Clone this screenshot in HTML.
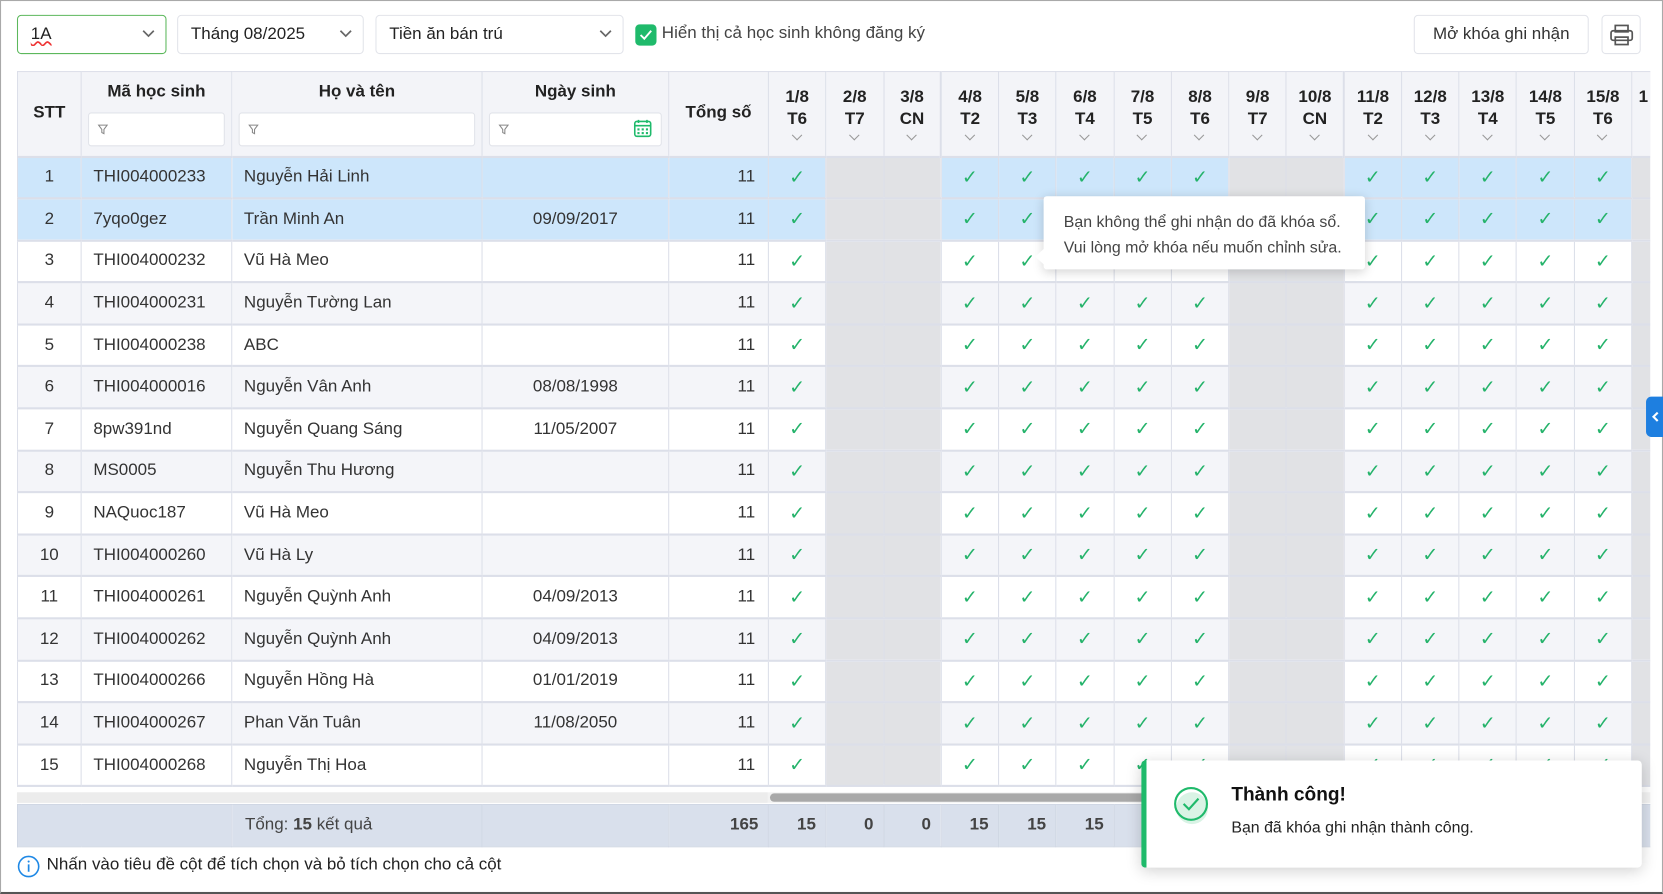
<!DOCTYPE html>
<html><head><meta charset="utf-8">
<style>
html,body{margin:0;padding:0;background:#fff;overflow:hidden}
body{width:1663px;height:894px}
#s{position:absolute;left:0;top:0;width:1568px;height:843px;transform:scale(1.06059);transform-origin:0 0;font-family:"Liberation Sans",sans-serif;color:#333;font-size:16px;box-sizing:border-box;border:1px solid #a9a9a9;border-bottom:2px solid #555}
.sel{position:absolute;top:13px;height:37px;border:1px solid #e2e4ea;border-radius:4px;box-sizing:border-box;padding:0 12px;line-height:35px;font-size:16px;color:#222}
.sel svg{position:absolute;right:10px;top:13px}
table{border-collapse:collapse;table-layout:fixed;width:1540px}
td,th{border:1px solid #dcdfe9;padding:0;overflow:hidden;white-space:nowrap}
th{background:#f3f4f8;font-weight:bold;color:#222;font-size:16px;vertical-align:top}
tbody tr{height:39.6px}
tbody td{border-top:2px solid #dcdfe9;border-bottom:2px solid #dcdfe9}
tbody tr:nth-child(even) td{background:#f4f5f9}
tbody tr.h td{background:#cde6fb}
td.c{text-align:center}
td.l{padding-left:11px}
td.r{text-align:right;padding-right:12px}
td.k::after{content:"✓";color:#25b36b;font-family:"DejaVu Sans",sans-serif;font-size:18px}
td.k{text-align:center}
tbody tr td.w{background:#e1e2e5!important}
.d{text-align:center;line-height:21px;padding-top:13px}
.d i{display:block;height:14px;position:relative}
.d i::after{content:"";position:absolute;left:50%;top:1px;width:6px;height:6px;margin-left:-4px;border-right:1.3px solid #999;border-bottom:1.3px solid #999;transform:rotate(45deg)}
.f{margin:10px 6px 0;height:30px;border:1px solid #e2e4ea;border-radius:3px;background:#fff;position:relative}
.f svg{position:absolute;left:8px;top:10px}
.ft td{background:#d9e0ec;border:1px solid #d0d7e4;height:33px;font-weight:bold;color:#444;text-align:right;padding-right:9px}
</style></head><body><div id="s">
<div class="sel" style="left:15px;width:141px;border-color:#5cb85c"><span style="text-decoration:underline wavy #e33">1A</span><svg width="12" height="8"><path d="M1 1l5 5 5-5" fill="none" stroke="#666" stroke-width="1.6"/></svg></div>
<div class="sel" style="left:166px;width:176px">Tháng 08/2025<svg width="12" height="8"><path d="M1 1l5 5 5-5" fill="none" stroke="#666" stroke-width="1.6"/></svg></div>
<div class="sel" style="left:353px;width:234px">Tiền ăn bán trú<svg width="12" height="8"><path d="M1 1l5 5 5-5" fill="none" stroke="#666" stroke-width="1.6"/></svg></div>
<div style="position:absolute;left:598px;top:22px;width:20px;height:20px;background:#1fba6b;border-radius:4px"><svg width="20" height="20"><path d="M5 10l3.5 3.5L15 6" fill="none" stroke="#fff" stroke-width="1.8"/></svg></div>
<div style="position:absolute;left:623px;top:22px;font-size:16px;color:#444">Hiển thị cả học sinh không đăng ký</div>
<div class="sel" style="left:1332px;width:165px;text-align:center;color:#333">Mở khóa ghi nhận</div>
<div class="sel" style="left:1509px;width:37px;padding:0"><svg width="37" height="37" style="position:absolute;left:0;top:0"><g fill="none" stroke="#555" stroke-width="1.6"><rect x="12" y="9" width="12" height="6"/><rect x="8" y="14" width="20" height="9" rx="2"/><rect x="12" y="20" width="12" height="7"/></g></svg></div>

<div style="position:absolute;left:15px;top:66px;width:1540px;height:680px;overflow:hidden">
<table>
<colgroup><col style="width:60px"><col style="width:142px"><col style="width:236px"><col style="width:176px"><col style="width:94px"><col span="15" style="width:54.27px"><col style="width:18px"></colgroup>
<thead><tr style="height:80px">
<th style="vertical-align:middle">STT</th>
<th><div style="text-align:center;margin-top:10px">Mã học sinh</div><div class="f"><svg width="10" height="10"><path d="M1 1h8L6 5v4L4 8V5z" fill="none" stroke="#888"/></svg></div></th>
<th><div style="text-align:center;margin-top:10px">Họ và tên</div><div class="f"><svg width="10" height="10"><path d="M1 1h8L6 5v4L4 8V5z" fill="none" stroke="#888"/></svg></div></th>
<th><div style="text-align:center;margin-top:10px">Ngày sinh</div><div class="f"><svg width="10" height="10"><path d="M1 1h8L6 5v4L4 8V5z" fill="none" stroke="#888"/></svg><svg width="18" height="18" style="left:auto;right:8px;top:5px"><g fill="none" stroke="#1fba6b" stroke-width="1.5"><rect x="1.5" y="2.5" width="15" height="14" rx="2"/><path d="M1.5 6.5h15M5 1v3M13 1v3"/></g><g fill="#1fba6b"><rect x="4" y="9" width="2" height="2"/><rect x="8" y="9" width="2" height="2"/><rect x="12" y="9" width="2" height="2"/><rect x="4" y="12.5" width="2" height="2"/><rect x="8" y="12.5" width="2" height="2"/><rect x="12" y="12.5" width="2" height="2"/></g></svg></div></th>
<th style="vertical-align:middle">Tổng số</th>
<th><div class="d">1/8<br>T6<i></i></div></th>
<th><div class="d">2/8<br>T7<i></i></div></th>
<th><div class="d">3/8<br>CN<i></i></div></th>
<th style="border-left:2px solid #dcdfe9"><div class="d">4/8<br>T2<i></i></div></th>
<th><div class="d">5/8<br>T3<i></i></div></th>
<th><div class="d">6/8<br>T4<i></i></div></th>
<th><div class="d">7/8<br>T5<i></i></div></th>
<th><div class="d">8/8<br>T6<i></i></div></th>
<th><div class="d">9/8<br>T7<i></i></div></th>
<th><div class="d">10/8<br>CN<i></i></div></th>
<th style="border-left:2px solid #dcdfe9"><div class="d">11/8<br>T2<i></i></div></th>
<th><div class="d">12/8<br>T3<i></i></div></th>
<th><div class="d">13/8<br>T4<i></i></div></th>
<th><div class="d">14/8<br>T5<i></i></div></th>
<th><div class="d">15/8<br>T6<i></i></div></th>
<th><div class="d" style="text-align:left;padding-left:6px">1</div></th>
</tr></thead>
<tbody>
<tr class="h"><td class="c">1</td><td class="l">THI004000233</td><td class="l">Nguyễn Hải Linh</td><td class="c"></td><td class="r">11</td><td class="k"></td><td class="w"></td><td class="w"></td><td class="k"></td><td class="k"></td><td class="k"></td><td class="k"></td><td class="k"></td><td class="w"></td><td class="w"></td><td class="k"></td><td class="k"></td><td class="k"></td><td class="k"></td><td class="k"></td><td class="w"></td></tr>
<tr class="h"><td class="c">2</td><td class="l">7yqo0gez</td><td class="l">Trần Minh An</td><td class="c">09/09/2017</td><td class="r">11</td><td class="k"></td><td class="w"></td><td class="w"></td><td class="k"></td><td class="k"></td><td class="k"></td><td class="k"></td><td class="k"></td><td class="w"></td><td class="w"></td><td class="k"></td><td class="k"></td><td class="k"></td><td class="k"></td><td class="k"></td><td class="w"></td></tr>
<tr><td class="c">3</td><td class="l">THI004000232</td><td class="l">Vũ Hà Meo</td><td class="c"></td><td class="r">11</td><td class="k"></td><td class="w"></td><td class="w"></td><td class="k"></td><td class="k"></td><td class="k"></td><td class="k"></td><td class="k"></td><td class="w"></td><td class="w"></td><td class="k"></td><td class="k"></td><td class="k"></td><td class="k"></td><td class="k"></td><td class="w"></td></tr>
<tr><td class="c">4</td><td class="l">THI004000231</td><td class="l">Nguyễn Tường Lan</td><td class="c"></td><td class="r">11</td><td class="k"></td><td class="w"></td><td class="w"></td><td class="k"></td><td class="k"></td><td class="k"></td><td class="k"></td><td class="k"></td><td class="w"></td><td class="w"></td><td class="k"></td><td class="k"></td><td class="k"></td><td class="k"></td><td class="k"></td><td class="w"></td></tr>
<tr><td class="c">5</td><td class="l">THI004000238</td><td class="l">ABC</td><td class="c"></td><td class="r">11</td><td class="k"></td><td class="w"></td><td class="w"></td><td class="k"></td><td class="k"></td><td class="k"></td><td class="k"></td><td class="k"></td><td class="w"></td><td class="w"></td><td class="k"></td><td class="k"></td><td class="k"></td><td class="k"></td><td class="k"></td><td class="w"></td></tr>
<tr><td class="c">6</td><td class="l">THI004000016</td><td class="l">Nguyễn Vân Anh</td><td class="c">08/08/1998</td><td class="r">11</td><td class="k"></td><td class="w"></td><td class="w"></td><td class="k"></td><td class="k"></td><td class="k"></td><td class="k"></td><td class="k"></td><td class="w"></td><td class="w"></td><td class="k"></td><td class="k"></td><td class="k"></td><td class="k"></td><td class="k"></td><td class="w"></td></tr>
<tr><td class="c">7</td><td class="l">8pw391nd</td><td class="l">Nguyễn Quang Sáng</td><td class="c">11/05/2007</td><td class="r">11</td><td class="k"></td><td class="w"></td><td class="w"></td><td class="k"></td><td class="k"></td><td class="k"></td><td class="k"></td><td class="k"></td><td class="w"></td><td class="w"></td><td class="k"></td><td class="k"></td><td class="k"></td><td class="k"></td><td class="k"></td><td class="w"></td></tr>
<tr><td class="c">8</td><td class="l">MS0005</td><td class="l">Nguyễn Thu Hương</td><td class="c"></td><td class="r">11</td><td class="k"></td><td class="w"></td><td class="w"></td><td class="k"></td><td class="k"></td><td class="k"></td><td class="k"></td><td class="k"></td><td class="w"></td><td class="w"></td><td class="k"></td><td class="k"></td><td class="k"></td><td class="k"></td><td class="k"></td><td class="w"></td></tr>
<tr><td class="c">9</td><td class="l">NAQuoc187</td><td class="l">Vũ Hà Meo</td><td class="c"></td><td class="r">11</td><td class="k"></td><td class="w"></td><td class="w"></td><td class="k"></td><td class="k"></td><td class="k"></td><td class="k"></td><td class="k"></td><td class="w"></td><td class="w"></td><td class="k"></td><td class="k"></td><td class="k"></td><td class="k"></td><td class="k"></td><td class="w"></td></tr>
<tr><td class="c">10</td><td class="l">THI004000260</td><td class="l">Vũ Hà Ly</td><td class="c"></td><td class="r">11</td><td class="k"></td><td class="w"></td><td class="w"></td><td class="k"></td><td class="k"></td><td class="k"></td><td class="k"></td><td class="k"></td><td class="w"></td><td class="w"></td><td class="k"></td><td class="k"></td><td class="k"></td><td class="k"></td><td class="k"></td><td class="w"></td></tr>
<tr><td class="c">11</td><td class="l">THI004000261</td><td class="l">Nguyễn Quỳnh Anh</td><td class="c">04/09/2013</td><td class="r">11</td><td class="k"></td><td class="w"></td><td class="w"></td><td class="k"></td><td class="k"></td><td class="k"></td><td class="k"></td><td class="k"></td><td class="w"></td><td class="w"></td><td class="k"></td><td class="k"></td><td class="k"></td><td class="k"></td><td class="k"></td><td class="w"></td></tr>
<tr><td class="c">12</td><td class="l">THI004000262</td><td class="l">Nguyễn Quỳnh Anh</td><td class="c">04/09/2013</td><td class="r">11</td><td class="k"></td><td class="w"></td><td class="w"></td><td class="k"></td><td class="k"></td><td class="k"></td><td class="k"></td><td class="k"></td><td class="w"></td><td class="w"></td><td class="k"></td><td class="k"></td><td class="k"></td><td class="k"></td><td class="k"></td><td class="w"></td></tr>
<tr><td class="c">13</td><td class="l">THI004000266</td><td class="l">Nguyễn Hồng Hà</td><td class="c">01/01/2019</td><td class="r">11</td><td class="k"></td><td class="w"></td><td class="w"></td><td class="k"></td><td class="k"></td><td class="k"></td><td class="k"></td><td class="k"></td><td class="w"></td><td class="w"></td><td class="k"></td><td class="k"></td><td class="k"></td><td class="k"></td><td class="k"></td><td class="w"></td></tr>
<tr><td class="c">14</td><td class="l">THI004000267</td><td class="l">Phan Văn Tuân</td><td class="c">11/08/2050</td><td class="r">11</td><td class="k"></td><td class="w"></td><td class="w"></td><td class="k"></td><td class="k"></td><td class="k"></td><td class="k"></td><td class="k"></td><td class="w"></td><td class="w"></td><td class="k"></td><td class="k"></td><td class="k"></td><td class="k"></td><td class="k"></td><td class="w"></td></tr>
<tr><td class="c">15</td><td class="l">THI004000268</td><td class="l">Nguyễn Thị Hoa</td><td class="c"></td><td class="r">11</td><td class="k"></td><td class="w"></td><td class="w"></td><td class="k"></td><td class="k"></td><td class="k"></td><td class="k"></td><td class="k"></td><td class="w"></td><td class="w"></td><td class="k"></td><td class="k"></td><td class="k"></td><td class="k"></td><td class="k"></td><td class="w"></td></tr>
</tbody></table>
</div>
<div style="position:absolute;left:15px;top:746px;width:708px;height:10px;background:#ececec"></div>
<div style="position:absolute;left:723px;top:746px;width:832px;height:10px;background:#f2f2f2"></div>
<div style="position:absolute;left:725px;top:747px;width:420px;height:8px;background:#a9a9a9;border-radius:4px"></div>
<div style="position:absolute;left:15px;top:757px;width:1540px;overflow:hidden">
<table class="ft"><colgroup><col style="width:60px"><col style="width:142px"><col style="width:236px"><col style="width:176px"><col style="width:94px"><col span="15" style="width:54.27px"><col style="width:18px"></colgroup>
<tr><td colspan="2"></td><td style="text-align:left;padding-left:12px;font-weight:normal">Tổng: <b>15</b> kết quả</td><td></td><td>165</td><td>15</td><td>0</td><td>0</td><td>15</td><td>15</td><td>15</td><td>15</td><td>15</td><td>0</td><td>0</td><td>15</td><td>15</td><td>15</td><td>15</td><td>15</td><td></td></tr></table></div>
<svg width="22" height="22" style="position:absolute;left:15px;top:805px"><circle cx="11" cy="11" r="9.5" fill="none" stroke="#1e88e5" stroke-width="1.5"/><path d="M11 9v7" stroke="#1e88e5" stroke-width="1.6"/><circle cx="11" cy="6.3" r="1" fill="#1e88e5"/></svg>
<div style="position:absolute;left:43px;top:806px;color:#222">Nhấn vào tiêu đề cột để tích chọn và bỏ tích chọn cho cả cột</div>
<div style="position:absolute;left:1551px;top:373px;width:17px;height:38px;background:#1e7fe0;border-radius:5px 0 0 5px"><svg width="17" height="38"><path d="M11 15l-4 4 4 4" fill="none" stroke="#fff" stroke-width="2"/></svg></div>
<div style="position:absolute;left:983px;top:184px;width:303px;height:69px;background:#fff;border-radius:3px;box-shadow:0 2px 10px rgba(0,0,0,.18);font-size:15px;color:#444;line-height:24px;padding:13px 0 0 19px;box-sizing:border-box">Bạn không thể ghi nhận do đã khóa sổ.<br>Vui lòng mở khóa nếu muốn chỉnh sửa.</div>
<div style="position:absolute;left:975px;top:233px;width:0;height:0;border-top:8px solid transparent;border-bottom:8px solid transparent;border-right:9px solid #fff"></div>
<div style="position:absolute;left:1075px;top:716px;width:472px;height:101px;background:#fff;border-left:5px solid #1fba6b;border-radius:4px;box-shadow:0 3px 14px rgba(0,0,0,.18);box-sizing:border-box">
<svg width="36" height="40" style="position:absolute;left:25px;top:24px"><circle cx="18" cy="21" r="15" fill="#d9f3e5"/><circle cx="17" cy="17" r="15" fill="none" stroke="#1fba6b" stroke-width="2"/><path d="M10 17l5 5 9-10" fill="none" stroke="#1fba6b" stroke-width="2"/></svg>
<div style="position:absolute;left:80px;top:22px;font-weight:bold;font-size:18px;color:#111">Thành công!</div>
<div style="position:absolute;left:80px;top:55px;font-size:15px;color:#222">Bạn đã khóa ghi nhận thành công.</div>
</div>
</div></body></html>
